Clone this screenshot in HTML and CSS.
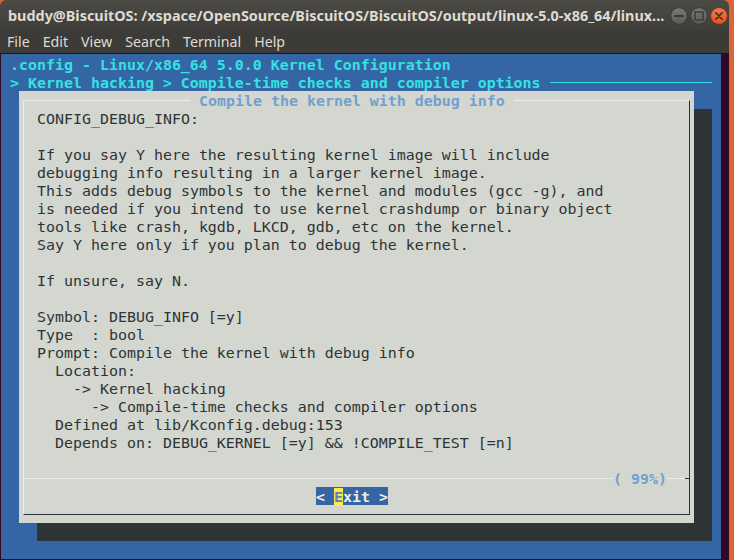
FILE: index.html
```html
<!DOCTYPE html>
<html>
<head>
<meta charset="utf-8">
<link rel="stylesheet" href="styles.css">
</head>
<body>
<div class="window">
  <div class="titlebar">
    <div class="title">buddy@BiscuitOS: /xspace/OpenSource/BiscuitOS/BiscuitOS/output/linux-5.0-x86_64/linux...</div>
    <div class="wbtns">
      <svg class="wbtn" width="18" height="18" viewBox="0 0 18 18">
        <defs><linearGradient id="g1" x1="0" y1="0" x2="0" y2="1"><stop offset="0" stop-color="#7a7975"/><stop offset="1" stop-color="#5a5955"/></linearGradient></defs>
        <circle cx="9" cy="9" r="8.3" fill="url(#g1)" stroke="#34332f" stroke-width="0.8"/>
        <rect x="4.5" y="8" width="9" height="2" fill="#3a3935"/>
      </svg>
      <svg class="wbtn" width="18" height="18" viewBox="0 0 18 18">
        <circle cx="9" cy="9" r="8.3" fill="url(#g1)" stroke="#34332f" stroke-width="0.8"/>
        <rect x="5" y="5" width="8" height="8" fill="none" stroke="#3a3935" stroke-width="1.4"/>
      </svg>
      <svg class="wbtn" width="18" height="18" viewBox="0 0 18 18">
        <defs><linearGradient id="g2" x1="0" y1="0" x2="0" y2="1"><stop offset="0" stop-color="#f47a4d"/><stop offset="1" stop-color="#e2521e"/></linearGradient></defs>
        <circle cx="9" cy="9" r="8.3" fill="url(#g2)" stroke="#7a2e12" stroke-width="0.6"/>
        <path d="M5.8 5.8 L12.2 12.2 M12.2 5.8 L5.8 12.2" stroke="#3a2a22" stroke-width="1.6" stroke-linecap="round"/>
      </svg>
    </div>
  </div>
  <div class="menubar">
    <span>File</span><span>Edit</span><span>View</span><span>Search</span><span>Terminal</span><span>Help</span>
  </div>
  <div class="termwrap">
    <div class="term">
      <div class="row hdr">.config - Linux/x86_64 5.0.0 Kernel Configuration</div>
      <div class="row crumb"><span>&gt; Kernel hacking &gt; Compile-time checks and compiler options</span><i class="hline"></i></div>
      <div class="dialog">
        <div class="frame">
          <div class="dtitle"><span> Compile the kernel with debug info </span></div>
          <div class="body">
            <div class="row">CONFIG_DEBUG_INFO:</div>
            <div class="row"></div>
            <div class="row">If you say Y here the resulting kernel image will include</div>
            <div class="row">debugging info resulting in a larger kernel image.</div>
            <div class="row">This adds debug symbols to the kernel and modules (gcc -g), and</div>
            <div class="row">is needed if you intend to use kernel crashdump or binary object</div>
            <div class="row">tools like crash, kgdb, LKCD, gdb, etc on the kernel.</div>
            <div class="row">Say Y here only if you plan to debug the kernel.</div>
            <div class="row"></div>
            <div class="row">If unsure, say N.</div>
            <div class="row"></div>
            <div class="row">Symbol: DEBUG_INFO [=y]</div>
            <div class="row">Type  : bool</div>
            <div class="row">Prompt: Compile the kernel with debug info</div>
            <div class="row">  Location:</div>
            <div class="row">    -&gt; Kernel hacking</div>
            <div class="row">      -&gt; Compile-time checks and compiler options</div>
            <div class="row">  Defined at lib/Kconfig.debug:153</div>
            <div class="row">  Depends on: DEBUG_KERNEL [=y] &amp;&amp; !COMPILE_TEST [=n]</div>
            <div class="row"></div>
          </div>
          <div class="sep"><i class="ln light grow"></i><span class="pct">( 99%)</span><i class="ln light w18"></i><i class="ln dark w4"></i></div>
          <div class="btnrow"><span class="btn">&lt; <b class="key">E</b>xit &gt;</span></div>
        </div>
      </div>
    </div>
  </div>
</div>
</body>
</html>
```

FILE: styles.css
```css
html, body {
  margin: 0;
  padding: 0;
}
body {
  background: #dd6435;
  width: 734px;
  height: 560px;
  overflow: hidden;
}
.window {
  width: 729px;
  height: 560px;
  display: flex;
  flex-direction: column;
}
.titlebar {
  height: 30px;
  flex: none;
  background: linear-gradient(#4b4a45, #3f3e3a);
  border-radius: 6px 6px 0 0;
  display: flex;
  align-items: center;
  padding: 0 0 0 8px;
  box-sizing: border-box;
}
.title {
  flex: 1;
  color: #dfdbd2;
  font-family: "Noto Sans", "DejaVu Sans", sans-serif;
  font-weight: bold;
  font-size: 14.4px;
  white-space: nowrap;
  overflow: hidden;
  padding-top: 1px;
}
.wbtns {
  display: flex;
  gap: 2px;
  padding-right: 1px;
  padding-top: 2px;
}
.wbtn {
  display: block;
}
.menubar {
  height: 23px;
  flex: none;
  background: #3c3b37;
  display: flex;
  align-items: center;
  gap: 13px;
  padding-left: 7px;
  font-family: "Noto Sans", "DejaVu Sans", sans-serif;
  font-size: 14.2px;
  color: #dfdbd2;
}
.termwrap {
  flex: 1;
  background: #300a24;
  padding: 1px 8px 1px 1px;
}
.term {
  width: 720px;
  height: 504px;
  padding-top: 1px;
  background: #3465a4;
  font-family: "DejaVu Sans Mono", monospace;
  font-size: 14.95px;
  line-height: 18px;
}
.row {
  height: 18px;
  box-sizing: border-box;
  padding-top: 1px;
  white-space: pre;
}
.hdr, .crumb {
  color: #34e2e2;
  font-weight: bold;
  padding-left: 9px;
}
.crumb {
  display: flex;
  align-items: flex-start;
}
.hline {
  display: block;
  margin-left: 9px;
  margin-top: 8px;
  width: 162px;
  height: 1px;
  background: #34e2e2;
}
.dialog {
  margin-left: 18px;
  width: 675px;
  box-sizing: border-box;
  padding: 9px 4px 8px 4px;
  background: #d3d7cf;
  box-shadow: 18px 18px 0 #2e3436;
  color: #2e3436;
}
.frame {
  border-style: solid;
  border-width: 1px;
  border-color: #eeeeec #2e3436 #2e3436 #eeeeec;
  padding-bottom: 9px;
}
.dtitle {
  margin-top: -10px;
  height: 18px;
  box-sizing: border-box;
  padding-top: 1px;
  padding-left: 166px;
  white-space: pre;
}
.dtitle span {
  background: #d3d7cf;
  color: #729fcf;
  font-weight: bold;
}
.body {
  padding-left: 13px;
}
.sep {
  height: 18px;
  display: flex;
  align-items: center;
}
.ln {
  display: block;
  height: 1px;
}
.light { background: #eeeeec; }
.dark { background: #2e3436; }
.grow { flex: 1; }
.w18 { width: 18px; }
.w4 { width: 4px; }
.pct {
  color: #729fcf;
  font-weight: bold;
  white-space: pre;
  padding-top: 2px;
}
.btnrow {
  height: 18px;
  padding-left: 292px;
}
.btn {
  background: #3465a4;
  color: #eeeeec;
  font-weight: bold;
  white-space: pre;
  display: inline-block;
  height: 18px;
  box-sizing: border-box;
  padding-top: 1px;
}
.key {
  background: #fce94f;
  color: #5b7fb8;
}
```
